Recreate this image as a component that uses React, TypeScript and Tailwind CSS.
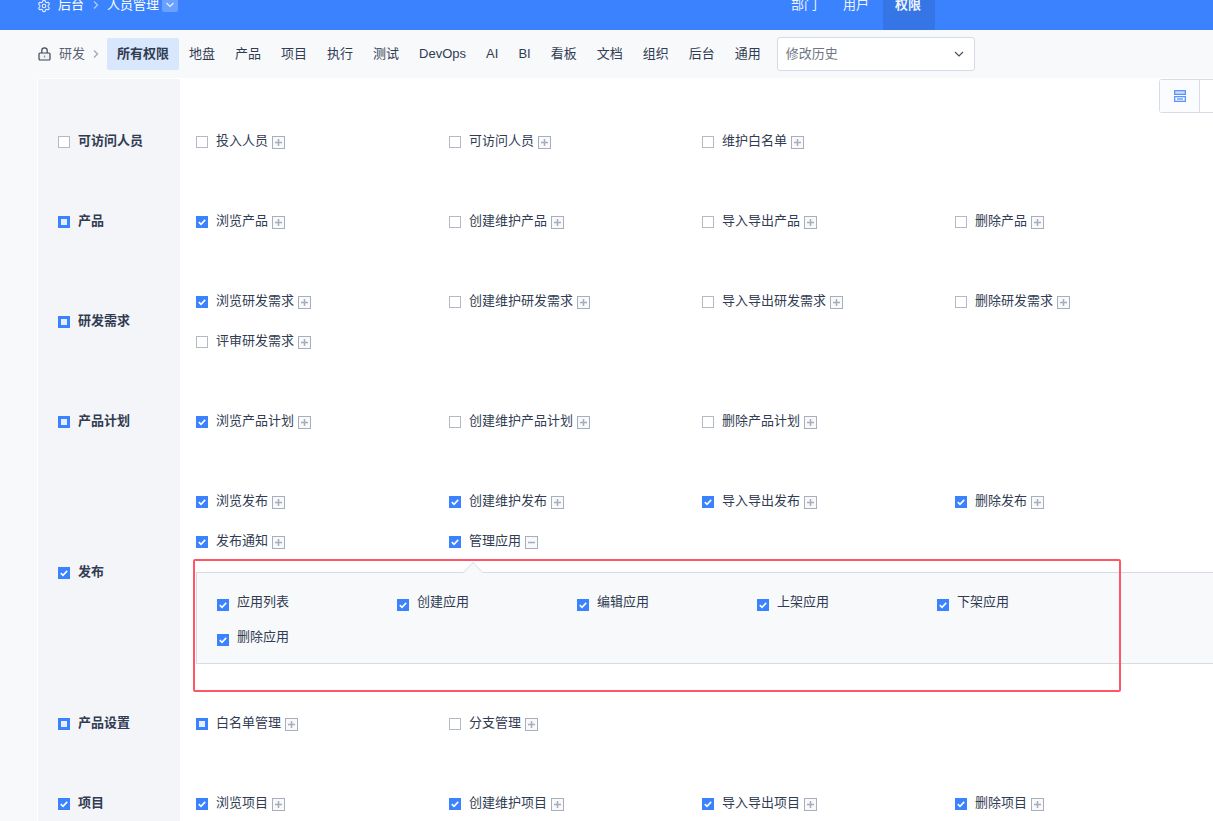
import React from "react";
import { Settings } from "lucide-react";

type S = "none" | "part" | "all";

function Box({ s }: { s: S }) {
  if (s === "none") return <span className="block w-3 h-3 shrink-0 border border-[#b4b9c6] bg-white" />;
  if (s === "part")
    return (
      <span className="flex items-center justify-center w-3 h-3 shrink-0 bg-[#3b82ff]">
        <span className="block w-[6px] h-[6px] bg-[#e6efff]" />
      </span>
    );
  return (
    <span className="flex items-center justify-center w-3 h-3 shrink-0 bg-[#3b82ff]">
      <svg width="10" height="10" viewBox="0 0 10 10" fill="none">
        <path d="M1.8 5.2 L4 7.3 L8.2 2.9" stroke="#fff" strokeWidth="1.6" />
      </svg>
    </span>
  );
}

function Toggle({ minus }: { minus?: boolean }) {
  return (
    <span className="block w-[13px] h-[13px] ml-[4px] mt-[3px] shrink-0 border border-[#a9aebc] bg-[#f8f9fb]">
      <svg width="11" height="11" viewBox="0 0 11 11" fill="none" className="block">
        <path d={minus ? "M2 5.5 H9" : "M2 5.5 H9 M5.5 2 V9"} stroke="#a8acb9" strokeWidth="1.5" />
      </svg>
    </span>
  );
}

function Item({ s, t, minus }: { s: S; t: string; minus?: boolean }) {
  return (
    <div className="w-[253px] h-10 flex items-center">
      <span className="mt-[2px]"><Box s={s} /></span>
      <span className="ml-2 text-[13px] text-[#313c52] leading-5">{t}</span>
      <Toggle minus={minus} />
    </div>
  );
}

function SubItem({ t }: { t: string }) {
  return (
    <div className="w-[180px] h-[35px] flex items-center">
      <span className="mt-[3px]"><Box s="all" /></span>
      <span className="ml-2 text-[13px] text-[#313c52] leading-5 -mt-[4px]">{t}</span>
    </div>
  );
}

function Row({ s, label, h, children }: { s: S; label: string; h: string; children: React.ReactNode }) {
  return (
    <div className={`flex ${h}`}>
      <div className="w-[142px] shrink-0 bg-[#f4f5f8] flex items-center pl-5">
        <span className="mt-[2px]"><Box s={s} /></span>
        <span className="ml-2 text-[13px] font-bold text-[#313c52]">{label}</span>
      </div>
      <div className="flex-1 min-w-0 pl-4 flex flex-col justify-center">{children}</div>
    </div>
  );
}

const tabs = ["地盘", "产品", "项目", "执行", "测试", "DevOps", "AI", "BI", "看板", "文档", "组织", "后台", "通用"];

function Chevron({ c }: { c: string }) {
  return (
    <svg width="8" height="10" viewBox="0 0 8 10" fill="none" className="shrink-0">
      <path d="M2 1.5 L5.5 5 L2 8.5" stroke={c} strokeWidth="1.4" />
    </svg>
  );
}

export default function App() {
  return (
    <div
      className="relative w-[1213px] h-[821px] overflow-hidden bg-[#f8f9fb]"
      style={{ fontFamily: '"Liberation Sans","Noto Sans CJK SC",sans-serif' }}
    >
      {/* top bar, scrolled so that only its lower part shows */}
      <div className="h-[30px] overflow-hidden bg-[#3b82ff]">
        <div className="h-[50px] -mt-[20px] flex pl-[38px] text-white">
          <div className="flex items-center h-[50px]">
            <Settings size={14} color="#e8f0ff" strokeWidth={1.8} className="mt-[2px] shrink-0 -ml-px" />
            <span className="ml-[7px] text-[13px]">后台</span>
            <span className="ml-[8px] mr-[7px]"><Chevron c="#a9c8ff" /></span>
            <span className="text-[13px]">人员管理</span>
            <span className="ml-[3px] w-4 h-[14px] rounded-[2px] bg-[#6aa0ff] flex items-center justify-center">
              <svg width="10" height="8" viewBox="0 0 10 8" fill="none">
                <path d="M1.5 2 L5 5.5 L8.5 2" stroke="#e8f0ff" strokeWidth="1.2" />
              </svg>
            </span>
          </div>
          <div className="flex h-[50px] ml-[601px] items-center text-[13px]">
            <span className="pl-[11px] pr-[13px] text-[#edf3ff] w-[52px] text-center whitespace-nowrap">部门</span>
            <span className="pl-[11px] pr-[13px] text-[#edf3ff] w-[52px] text-center whitespace-nowrap">用户</span>
            <span className="pl-[11px] pr-[13px] h-full flex items-center bg-[#3575e6] font-bold text-[#edf3ff] w-[52px] justify-center whitespace-nowrap">权限</span>
          </div>
        </div>
      </div>

      {/* tab row */}
      <div className="h-[48px] pl-[38px] flex items-center">
        <svg width="13" height="14" viewBox="0 0 13 14" fill="none" stroke="#3f4758" strokeWidth="1.2" className="shrink-0">
          <rect x="1" y="6" width="11" height="7" rx="1" fill="#f1f2f5" />
          <path d="M3.8 6 V3.6 a2.7 2.7 0 0 1 5.4 0 V6" />
          <path d="M6.5 8.6 V10.4" stroke="#6f86b0" />
        </svg>
        <span className="ml-2 text-[13px] text-[#5a6272] leading-8">研发</span>
        <span className="ml-[7px] mr-[7px]"><Chevron c="#a3a8b6" /></span>
        <span className="h-8 px-[10px] flex items-center bg-[#d9e7fd] rounded-[2px] text-[13px] font-bold text-[#313c52]">所有权限</span>
        {tabs.map((t, i) => (
          <span key={i} className="h-8 px-[10px] flex items-center text-[13px] text-[#313c52]">{t}</span>
        ))}
        <div className="ml-[6px] w-[198px] h-[34px] rounded-[3px] border border-[#d8dbe6] bg-white flex items-center justify-between pl-2 pr-[10px]">
          <span className="text-[13px] text-[#6f7686]">修改历史</span>
          <svg width="10" height="8" viewBox="0 0 10 8" fill="none">
            <path d="M1 2 L5 6 L9 2" stroke="#4a5060" strokeWidth="1.2" />
          </svg>
        </div>
      </div>

      {/* matrix */}
      <div className="ml-[37px] border-l border-t border-white bg-white">
        <div className="flex h-[22px]">
          <div className="w-[142px] bg-[#f4f5f8]" />
        </div>
        <Row s="none" label="可访问人员" h="h-20">
          <div className="flex"><Item s="none" t="投入人员" /><Item s="none" t="可访问人员" /><Item s="none" t="维护白名单" /></div>
        </Row>
        <Row s="part" label="产品" h="h-20">
          <div className="flex"><Item s="all" t="浏览产品" /><Item s="none" t="创建维护产品" /><Item s="none" t="导入导出产品" /><Item s="none" t="删除产品" /></div>
        </Row>
        <Row s="part" label="研发需求" h="h-[120px]">
          <div className="flex"><Item s="all" t="浏览研发需求" /><Item s="none" t="创建维护研发需求" /><Item s="none" t="导入导出研发需求" /><Item s="none" t="删除研发需求" /></div>
          <div className="flex"><Item s="none" t="评审研发需求" /></div>
        </Row>
        <Row s="part" label="产品计划" h="h-20">
          <div className="flex"><Item s="all" t="浏览产品计划" /><Item s="none" t="创建维护产品计划" /><Item s="none" t="删除产品计划" /></div>
        </Row>
        <Row s="all" label="发布" h="h-[222px]">
          <div className="h-full pt-5">
            <div className="flex"><Item s="all" t="浏览发布" /><Item s="all" t="创建维护发布" /><Item s="all" t="导入导出发布" /><Item s="all" t="删除发布" /></div>
            <div className="flex"><Item s="all" t="发布通知" /><Item s="all" t="管理应用" minus /></div>
            <div className="relative mt-[11px] h-[92px] border border-r-0 border-[#d8dbe3] bg-[#f8f9fb] pl-5 pt-[13px]">
              <span className="absolute left-[269px] -top-[8px] w-[14px] h-[14px] rotate-45 border-l border-t border-[#e2e4ea] bg-[#f8f9fb]" />
              <div className="flex flex-wrap">
                {["应用列表", "创建应用", "编辑应用", "上架应用", "下架应用", "删除应用"].map((t) => (
                  <SubItem key={t} t={t} />
                ))}
              </div>
            </div>
          </div>
        </Row>
        <Row s="part" label="产品设置" h="h-20">
          <div className="flex"><Item s="part" t="白名单管理" /><Item s="none" t="分支管理" /></div>
        </Row>
        <Row s="all" label="项目" h="h-20">
          <div className="flex"><Item s="all" t="浏览项目" /><Item s="all" t="创建维护项目" /><Item s="all" t="导入导出项目" /><Item s="all" t="删除项目" /></div>
        </Row>
      </div>

      {/* view switch over the table */}
      <div className="absolute left-[1159px] top-[79px] w-[60px] h-[34px] flex border border-[#d8dbe6] rounded-[3px] bg-white">
        <div className="w-10 border-r border-[#d8dbe6] flex items-center justify-center bg-[#fbfcff]">
          <svg width="12" height="12" viewBox="0 0 12 12" fill="none" stroke="#5b93ff" strokeWidth="1.3">
            <rect x="0.65" y="0.65" width="10.7" height="3.7" fill="#cfe0ff" />
            <rect x="0.65" y="6.65" width="10.7" height="4.7" />
            <path d="M3 9 H9" />
          </svg>
        </div>
      </div>

      {/* highlight annotation */}
      <div className="absolute left-[193px] top-[559px] w-[928px] h-[133px] border-2 border-[#ff5566] rounded-[2px] pointer-events-none" />
    </div>
  );
}
